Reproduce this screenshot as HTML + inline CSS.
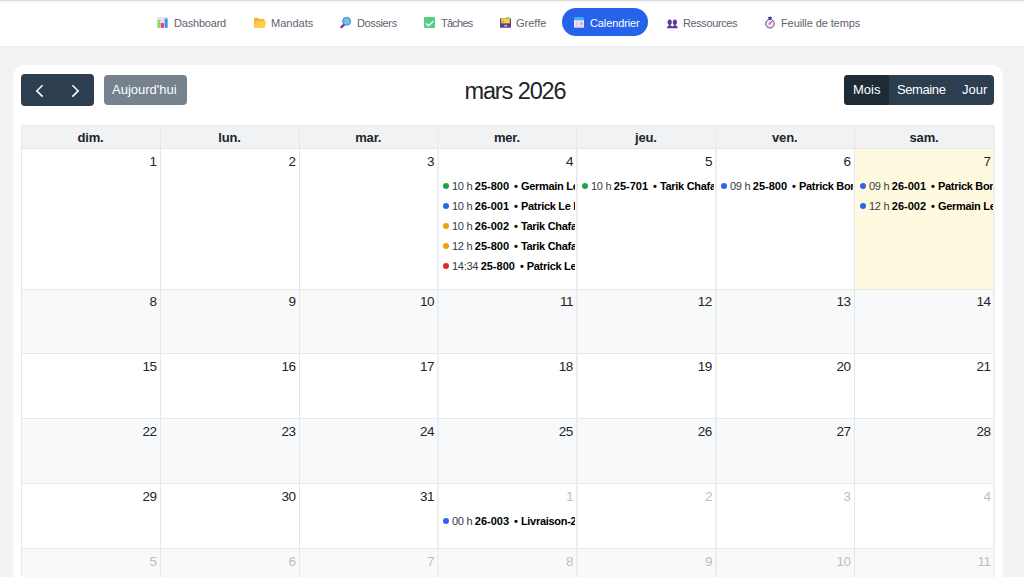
<!DOCTYPE html>
<html><head><meta charset="utf-8">
<style>
*{box-sizing:border-box;margin:0;padding:0}
html,body{width:1024px;height:577px;overflow:hidden}
body{background:#f2f3f5;font-family:"Liberation Sans",sans-serif;position:relative;color:#212529}
.a{position:absolute}
header{position:absolute;left:0;top:0;width:1024px;height:47px;background:#fff;border-bottom:1px solid #e9eaee}
.nav{position:absolute;top:16px;font-size:11px;color:#5d6470;white-space:nowrap;line-height:14px}
.pill{position:absolute;left:562px;top:8px;width:86px;height:28px;border-radius:14px;background:#2563eb}
.card{position:absolute;left:13px;top:65px;width:990px;height:600px;background:#fff;border-radius:12px}
.btn{position:absolute;background:#2c3e50;color:#fff;font-size:13px;line-height:16px;white-space:nowrap}
.hd{position:absolute;top:125px;height:24px;background:#f1f2f4;border-top:1px solid #e6e7e9;font-size:13px;font-weight:bold;text-align:center;line-height:22px;padding-top:1px;color:#212529;letter-spacing:-0.2px}
.cell{position:absolute}
.vl{position:absolute;width:1px;background:#ddd}
.hl{position:absolute;height:1px;background:#e7e8e9}
.dn{position:absolute;font-size:13.5px;letter-spacing:-0.5px;line-height:16px;color:#212529;text-align:right;width:40px}
.dn.o{color:#bcbec0}
.ev{position:absolute;font-size:11px;white-space:nowrap;overflow:hidden;line-height:14px;color:#333a44;height:16px}
.ev i{position:absolute;left:0;top:5px;width:6px;height:6px;border-radius:3px}
.ev span{position:absolute;left:9px;top:1px;letter-spacing:-0.3px}
.ev b{font-weight:bold;color:#000;margin-left:2.6px;letter-spacing:0}
.ev u{text-decoration:none;margin:0 3px 0 5px}
.ev em{font-style:normal;letter-spacing:-0.3px}
</style></head><body>
<header>
<div class="a" style="left:0;top:0;width:1024px;height:1px;background:#dcdede"></div>
<div class="a" style="left:0;top:1px;width:1024px;height:1px;background:#f4f5f6"></div>
<div class="a" style="left:0;top:2px;width:1024px;height:1px;background:#fafafa"></div>
<div class="pill"></div>
<div class="nav" style="left:174px;letter-spacing:-0.2px">Dashboard</div>
<div class="nav" style="left:271px">Mandats</div>
<div class="nav" style="left:357px;letter-spacing:-0.38px">Dossiers</div>
<div class="nav" style="left:441px;letter-spacing:-0.75px">Tâches</div>
<div class="nav" style="left:516px">Greffe</div>
<div class="nav" style="left:590px;color:#fff;letter-spacing:-0.12px">Calendrier</div>
<div class="nav" style="left:683px;letter-spacing:-0.4px">Ressources</div>
<div class="nav" style="left:781px;letter-spacing:-0.1px">Feuille de temps</div>
<svg class="a" style="left:156px;top:16px" width="13" height="13" viewBox="0 0 13 13">
<rect x="1" y="1" width="11" height="11" fill="#ebe6ee"/>
<path d="M1 4.5H12M1 8H12M4.6 1V12M8.3 1V12" stroke="#d9d2dd" stroke-width="0.5"/>
<rect x="1.6" y="3.8" width="2.6" height="8" rx="0.6" fill="#8fdc58"/>
<rect x="4.9" y="6.9" width="3.1" height="4.9" rx="0.6" fill="#ea3b78"/>
<rect x="8.7" y="2.4" width="2.9" height="9.4" rx="0.6" fill="#2f96ec"/>
</svg>
<svg class="a" style="left:253px;top:16px" width="14" height="13" viewBox="0 0 14 13">
<path d="M1 2.2Q1 1.7 1.5 1.7H4.8L6.2 3.1H11Q11.6 3.1 11.6 3.7V11.9H1Z" fill="#f8b43a"/>
<path d="M3.3 5.3H12.6Q13.2 5.3 13 5.9L11.7 11.9H1Z" fill="#ffd04a"/>
</svg>
<svg class="a" style="left:339px;top:16px" width="13" height="13" viewBox="0 0 13 13">
<path d="M2.4 11.1L5.2 8.3" stroke="#7d3f9c" stroke-width="2.4" stroke-linecap="round"/>
<circle cx="7.6" cy="5.3" r="4" fill="#5ccbea" stroke="#5a5ed0" stroke-width="0.8"/>
</svg>
<svg class="a" style="left:423px;top:16px" width="13" height="13" viewBox="0 0 13 13">
<rect x="1" y="1" width="11" height="11" rx="1" fill="#52cf85"/>
<path d="M3.2 7.7L5.6 9.7L10 5.5" fill="none" stroke="#fff" stroke-width="1.3" stroke-linecap="round" stroke-linejoin="round"/>
</svg>
<svg class="a" style="left:499px;top:16px" width="13" height="13" viewBox="0 0 13 13">
<rect x="1" y="2.2" width="11" height="9.6" rx="0.8" fill="#5a418c"/>
<rect x="2.2" y="2.4" width="8.6" height="4.9" fill="#ffd23c"/>
<ellipse cx="8.5" cy="1.8" rx="1.5" ry="0.9" fill="#5fd56a"/>
<ellipse cx="4.5" cy="5.4" rx="1.2" ry="0.7" fill="#f25a33"/>
<rect x="5.3" y="8.7" width="2.9" height="2" rx="0.5" fill="#b9a5e0"/>
</svg>
<svg class="a" style="left:573px;top:16px" width="13" height="13" viewBox="0 0 13 13">
<rect x="1" y="4.1" width="10" height="7.6" fill="#f3dff0"/>
<path d="M1.2 1.8Q1.2 1.1 1.9 1.1H10.1Q10.9 1.1 10.9 1.8V4.1H1.2Z" fill="#3daaf2"/>
<path d="M3.6 4.5V11.3M6 4.5V11.3M8.4 4.5V11.3" stroke="#c9b6cc" stroke-width="0.5"/>
<ellipse cx="8.6" cy="7.6" rx="0.8" ry="1.2" fill="#4aa3ee"/>
</svg>
<svg class="a" style="left:666px;top:18px" width="13" height="12" viewBox="0 0 13 12">
<ellipse cx="3.7" cy="4.3" rx="2.1" ry="2.7" fill="#5b3a9e"/>
<ellipse cx="8.9" cy="4.3" rx="2.1" ry="2.7" fill="#5b3a9e"/>
<path d="M1 10.3Q1 7.6 3.7 7.6Q5.6 7.6 6.3 8.6Q7 7.6 8.9 7.6Q11.8 7.6 11.8 10.3V10.3H1Z" fill="#5b3a9e"/>
<rect x="2.9" y="6.5" width="1.6" height="1.5" fill="#5b3a9e"/><rect x="8.1" y="6.5" width="1.6" height="1.5" fill="#5b3a9e"/>
</svg>
<svg class="a" style="left:764px;top:15px" width="13" height="14" viewBox="0 0 13 14">
<rect x="4.1" y="1.8" width="3.8" height="2.3" rx="1.1" fill="#45337f"/>
<rect x="5.4" y="3.6" width="1.2" height="1.6" fill="#45337f"/>
<circle cx="6" cy="8.7" r="4.3" fill="#ebe7f2" stroke="#54418f" stroke-width="1"/>
<path d="M5.2 9.2L7.8 6.6" stroke="#e6447a" stroke-width="1.2" stroke-linecap="round"/>
</svg>

</header>
<div class="card"></div>
<div class="btn" style="left:21px;top:74px;width:73px;height:31.5px;border-radius:4px">
<svg class="a" style="left:0;top:0" width="73" height="32" viewBox="0 0 73 32"><path d="M21.6 11.3 L15.8 16.9 L21.6 22.6" fill="none" stroke="#fff" stroke-width="1.5"/><path d="M51.4 11.3 L57.2 16.9 L51.4 22.6" fill="none" stroke="#fff" stroke-width="1.5"/></svg>
</div>
<div class="btn" style="left:104px;top:75px;width:83px;height:30px;border-radius:4px;background:#76828d"><span class="a" style="left:8px;top:7px">Aujourd'hui</span></div>
<div class="a" style="left:399px;top:78px;width:232px;text-align:center;font-size:23.5px;letter-spacing:-1.1px;line-height:26px;color:#212529">mars 2026</div>
<div class="btn" style="left:844px;top:75px;width:150px;height:30px;border-radius:4px"></div>
<div class="btn" style="left:844px;top:75px;width:45px;height:30px;border-radius:4px 0 0 4px;background:#1e2b37"><span class="a" style="left:9px;top:7px">Mois</span></div>
<div class="btn" style="left:889px;top:75px;width:64px;height:30px;background:transparent"><span class="a" style="left:8px;top:7px;letter-spacing:-0.4px">Semaine</span></div>
<div class="btn" style="left:953px;top:75px;width:41px;height:30px;background:transparent"><span class="a" style="left:9px;top:7px">Jour</span></div>

<div class="hd" style="left:21.00px;width:139.00px">dim.</div>
<div class="hd" style="left:160.00px;width:139.00px">lun.</div>
<div class="hd" style="left:299.00px;width:138.50px">mar.</div>
<div class="hd" style="left:437.50px;width:138.90px">mer.</div>
<div class="hd" style="left:576.40px;width:139.00px">jeu.</div>
<div class="hd" style="left:715.40px;width:138.60px">ven.</div>
<div class="hd" style="left:854.00px;width:140.00px">sam.</div>
<div class="cell" style="left:21px;top:149px;width:974px;height:140.00px;background:#ffffff"></div>
<div class="cell" style="left:21px;top:289px;width:974px;height:64.00px;background:#f8f9fa"></div>
<div class="cell" style="left:21px;top:353px;width:974px;height:65.00px;background:#ffffff"></div>
<div class="cell" style="left:21px;top:418px;width:974px;height:65.00px;background:#f8f9fa"></div>
<div class="cell" style="left:21px;top:483px;width:974px;height:65.00px;background:#ffffff"></div>
<div class="cell" style="left:21px;top:548px;width:974px;height:65.00px;background:#f8f9fa"></div>
<div class="cell" style="left:854.00px;top:149px;width:140.00px;height:140.00px;background:#fffadf"></div>
<div class="hl" style="left:21px;top:148px;width:974px"></div>
<div class="hl" style="left:21px;top:289.00px;width:974px"></div>
<div class="hl" style="left:21px;top:353.00px;width:974px"></div>
<div class="hl" style="left:21px;top:418.00px;width:974px"></div>
<div class="hl" style="left:21px;top:483.00px;width:974px"></div>
<div class="hl" style="left:21px;top:548.00px;width:974px"></div>
<div class="vl" style="left:21px;top:125px;height:460px;width:1px;background:#e6e7e9"></div>
<div class="vl" style="left:160px;top:125px;height:460px;width:1px;background:#e6e7e9"></div>
<div class="vl" style="left:299px;top:125px;height:460px;width:1px;background:#e6e7e9"></div>
<div class="vl" style="left:437px;top:125px;height:460px;width:2px;background:#eeeff0"></div>
<div class="vl" style="left:576px;top:125px;height:460px;width:1px;background:#e8e9ea"></div>
<div class="vl" style="left:577px;top:125px;height:460px;width:1px;background:#f0f1f1"></div>
<div class="vl" style="left:715px;top:125px;height:460px;width:1px;background:#e8e9ea"></div>
<div class="vl" style="left:716px;top:125px;height:460px;width:1px;background:#f0f1f1"></div>
<div class="vl" style="left:854px;top:125px;height:460px;width:1px;background:#e6e7e9"></div>
<div class="vl" style="left:993px;top:125px;height:460px;width:2px;background:#eeefef"></div>
<div class="dn" style="left:116.50px;top:154px">1</div>
<div class="dn" style="left:255.50px;top:154px">2</div>
<div class="dn" style="left:394.00px;top:154px">3</div>
<div class="dn" style="left:532.90px;top:154px">4</div>
<div class="dn" style="left:671.90px;top:154px">5</div>
<div class="dn" style="left:810.50px;top:154px">6</div>
<div class="dn" style="left:950.50px;top:154px">7</div>
<div class="dn" style="left:116.50px;top:294px">8</div>
<div class="dn" style="left:255.50px;top:294px">9</div>
<div class="dn" style="left:394.00px;top:294px">10</div>
<div class="dn" style="left:532.90px;top:294px">11</div>
<div class="dn" style="left:671.90px;top:294px">12</div>
<div class="dn" style="left:810.50px;top:294px">13</div>
<div class="dn" style="left:950.50px;top:294px">14</div>
<div class="dn" style="left:116.50px;top:359px">15</div>
<div class="dn" style="left:255.50px;top:359px">16</div>
<div class="dn" style="left:394.00px;top:359px">17</div>
<div class="dn" style="left:532.90px;top:359px">18</div>
<div class="dn" style="left:671.90px;top:359px">19</div>
<div class="dn" style="left:810.50px;top:359px">20</div>
<div class="dn" style="left:950.50px;top:359px">21</div>
<div class="dn" style="left:116.50px;top:424px">22</div>
<div class="dn" style="left:255.50px;top:424px">23</div>
<div class="dn" style="left:394.00px;top:424px">24</div>
<div class="dn" style="left:532.90px;top:424px">25</div>
<div class="dn" style="left:671.90px;top:424px">26</div>
<div class="dn" style="left:810.50px;top:424px">27</div>
<div class="dn" style="left:950.50px;top:424px">28</div>
<div class="dn" style="left:116.50px;top:489px">29</div>
<div class="dn" style="left:255.50px;top:489px">30</div>
<div class="dn" style="left:394.00px;top:489px">31</div>
<div class="dn o" style="left:532.90px;top:489px">1</div>
<div class="dn o" style="left:671.90px;top:489px">2</div>
<div class="dn o" style="left:810.50px;top:489px">3</div>
<div class="dn o" style="left:950.50px;top:489px">4</div>
<div class="dn o" style="left:116.50px;top:554px">5</div>
<div class="dn o" style="left:255.50px;top:554px">6</div>
<div class="dn o" style="left:394.00px;top:554px">7</div>
<div class="dn o" style="left:532.90px;top:554px">8</div>
<div class="dn o" style="left:671.90px;top:554px">9</div>
<div class="dn o" style="left:810.50px;top:554px">10</div>
<div class="dn o" style="left:950.50px;top:554px">11</div>
<div class="ev" style="left:443.00px;top:178.00px;width:132.00px"><i style="background:#1fa34a"></i><span>10 h<b>25-800<u>•</u><em>Germain Le Goff</em></b></span></div>
<div class="ev" style="left:443.00px;top:198.00px;width:132.00px"><i style="background:#2f63eb"></i><span>10 h<b>26-001<u>•</u><em>Patrick Le Bris</em></b></span></div>
<div class="ev" style="left:443.00px;top:218.00px;width:132.00px"><i style="background:#f59f0c"></i><span>10 h<b>26-002<u>•</u><em>Tarik Chafai</em></b></span></div>
<div class="ev" style="left:443.00px;top:238.00px;width:132.00px"><i style="background:#f59f0c"></i><span>12 h<b>25-800<u>•</u><em>Tarik Chafai</em></b></span></div>
<div class="ev" style="left:443.00px;top:258.00px;width:132.00px"><i style="background:#dc2a2a"></i><span>14:34<b>25-800<u>•</u><em>Patrick Le Bris</em></b></span></div>
<div class="ev" style="left:582.00px;top:178.00px;width:132.00px"><i style="background:#1fa34a"></i><span>10 h<b>25-701<u>•</u><em>Tarik Chafai</em></b></span></div>
<div class="ev" style="left:721.00px;top:178.00px;width:131.60px"><i style="background:#2f63eb"></i><span>09 h<b>25-800<u>•</u><em>Patrick Bonnet</em></b></span></div>
<div class="ev" style="left:860.00px;top:178.00px;width:132.60px"><i style="background:#2f63eb"></i><span>09 h<b>26-001<u>•</u><em>Patrick Bonnet</em></b></span></div>
<div class="ev" style="left:860.00px;top:198.00px;width:132.60px"><i style="background:#2f63eb"></i><span>12 h<b>26-002<u>•</u><em>Germain Le Goff</em></b></span></div>
<div class="ev" style="left:443.00px;top:512.60px;width:132.00px"><i style="background:#2f63eb"></i><span>00 h<b>26-003<u>•</u><em>Livraison-2026</em></b></span></div>
</body></html>
